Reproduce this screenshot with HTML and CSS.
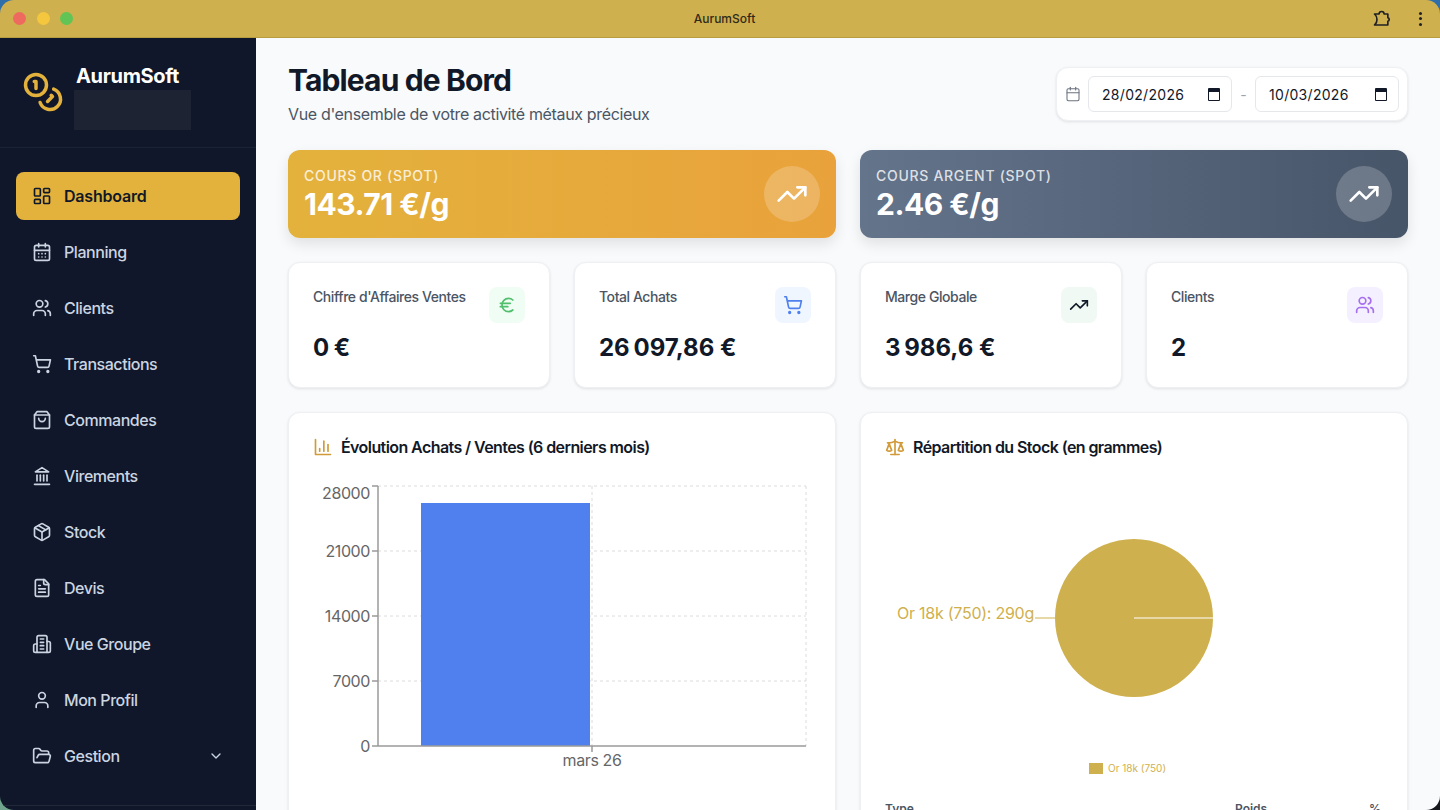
FILE: index.html
```html
<!DOCTYPE html>
<html lang="fr">
<head>
  <meta charset="UTF-8">
  <title>AurumSoft</title>
  <link rel="stylesheet" href="styles.css">
</head>
<body>
  <svg class="icon-defs" xmlns="http://www.w3.org/2000/svg">
    <symbol id="i-dashboard" viewBox="0 0 24 24"><rect x="3" y="3" width="7" height="9" rx="1"/><rect x="14" y="3" width="7" height="5" rx="1"/><rect x="14" y="12" width="7" height="9" rx="1"/><rect x="3" y="16" width="7" height="5" rx="1"/></symbol>
    <symbol id="i-planning" viewBox="0 0 24 24"><path d="M8 2v4"/><path d="M16 2v4"/><rect x="3" y="4" width="18" height="18" rx="2"/><path d="M3 10h18"/><path d="M8 14h.01"/><path d="M12 14h.01"/><path d="M16 14h.01"/><path d="M8 18h.01"/><path d="M12 18h.01"/><path d="M16 18h.01"/></symbol>
    <symbol id="i-users" viewBox="0 0 24 24"><path d="M16 21v-2a4 4 0 0 0-4-4H6a4 4 0 0 0-4 4v2"/><circle cx="9" cy="7" r="4"/><path d="M22 21v-2a4 4 0 0 0-3-3.87"/><path d="M16 3.13a4 4 0 0 1 0 7.75"/></symbol>
    <symbol id="i-cart" viewBox="0 0 24 24"><circle cx="8" cy="21" r="1"/><circle cx="19" cy="21" r="1"/><path d="M2.05 2.05h2l2.66 12.42a2 2 0 0 0 2 1.58h9.78a2 2 0 0 0 1.95-1.57l1.65-7.43H5.12"/></symbol>
    <symbol id="i-bag" viewBox="0 0 24 24"><path d="M6 2 3 6v14a2 2 0 0 0 2 2h14a2 2 0 0 0 2-2V6l-3-4Z"/><path d="M3 6h18"/><path d="M16 10a4 4 0 0 1-8 0"/></symbol>
    <symbol id="i-bank" viewBox="0 0 24 24"><path d="M3 22h18"/><path d="M6 18v-7"/><path d="M10 18v-7"/><path d="M14 18v-7"/><path d="M18 18v-7"/><path d="M12 2l8 5H4Z"/></symbol>
    <symbol id="i-package" viewBox="0 0 24 24"><path d="m7.5 4.27 9 5.15"/><path d="M21 8a2 2 0 0 0-1-1.73l-7-4a2 2 0 0 0-2 0l-7 4A2 2 0 0 0 3 8v8a2 2 0 0 0 1 1.73l7 4a2 2 0 0 0 2 0l7-4A2 2 0 0 0 21 16Z"/><path d="m3.3 7 8.7 5 8.7-5"/><path d="M12 22V12"/></symbol>
    <symbol id="i-file" viewBox="0 0 24 24"><path d="M15 2H6a2 2 0 0 0-2 2v16a2 2 0 0 0 2 2h12a2 2 0 0 0 2-2V7Z"/><path d="M14 2v4a2 2 0 0 0 2 2h4"/><path d="M10 9H8"/><path d="M16 13H8"/><path d="M16 17H8"/></symbol>
    <symbol id="i-building" viewBox="0 0 24 24"><path d="M6 22V4a2 2 0 0 1 2-2h8a2 2 0 0 1 2 2v18Z"/><path d="M6 12H4a2 2 0 0 0-2 2v6a2 2 0 0 0 2 2h2"/><path d="M18 9h2a2 2 0 0 1 2 2v9a2 2 0 0 1-2 2h-2"/><path d="M10 6h4"/><path d="M10 10h4"/><path d="M10 14h4"/><path d="M10 18h4"/></symbol>
    <symbol id="i-user" viewBox="0 0 24 24"><path d="M19 21v-2a4 4 0 0 0-4-4H9a4 4 0 0 0-4 4v2"/><circle cx="12" cy="7" r="4"/></symbol>
    <symbol id="i-folder" viewBox="0 0 24 24"><path d="m6 14 1.5-2.9A2 2 0 0 1 9.24 10H20a2 2 0 0 1 1.94 2.5l-1.54 6a2 2 0 0 1-1.95 1.5H4a2 2 0 0 1-2-2V5a2 2 0 0 1 2-2h3.9a2 2 0 0 1 1.69.9l.81 1.2a2 2 0 0 0 1.67.9H18a2 2 0 0 1 2 2v2"/></symbol>
    <symbol id="i-trend" viewBox="0 0 24 24"><path d="M22 7l-8.5 8.5-5-5L2 17"/><path d="M16 7h6v6"/></symbol>
    <symbol id="i-calendar" viewBox="0 0 24 24"><path d="M8 2v4"/><path d="M16 2v4"/><rect x="3" y="4" width="18" height="18" rx="2"/><path d="M3 10h18"/></symbol>
  </svg>

  <div class="window">
    <!-- Title bar -->
    <header class="titlebar">
      <div class="traffic">
        <span class="light light-red"></span>
        <span class="light light-yellow"></span>
        <span class="light light-green"></span>
      </div>
      <span class="window-title">AurumSoft</span>
      <div class="titlebar-tools">
        <svg class="ext-icon" viewBox="0 0 24 24"><path d="M3 6h5.5a3 3 0 0 1 6 0H19v4.3a2.3 2.3 0 0 1 0 4.4v4.5H3c.8-.8 3-2.5 3-6.7S3.8 6.8 3 6Z"/></svg>
        <span class="kebab"><i></i><i></i><i></i></span>
      </div>
    </header>

    <div class="app">
      <!-- Sidebar -->
      <aside class="sidebar">
        <div class="brand">
          <svg class="brand-logo" viewBox="0 0 24 24"><circle cx="8" cy="8" r="6"/><path d="M18.09 10.37A6 6 0 1 1 10.34 18"/><path d="M7 6h1v4"/><path d="m16.71 13.88.7.71-2.82 2.82"/></svg>
          <div class="brand-text">
            <div class="brand-name">AurumSoft</div>
            <div class="brand-blank"></div>
          </div>
        </div>
        <nav class="nav">
          <a class="nav-item active"><svg class="icon"><use href="#i-dashboard"/></svg>Dashboard</a>
          <a class="nav-item"><svg class="icon"><use href="#i-planning"/></svg>Planning</a>
          <a class="nav-item"><svg class="icon"><use href="#i-users"/></svg>Clients</a>
          <a class="nav-item"><svg class="icon"><use href="#i-cart"/></svg>Transactions</a>
          <a class="nav-item"><svg class="icon"><use href="#i-bag"/></svg>Commandes</a>
          <a class="nav-item"><svg class="icon"><use href="#i-bank"/></svg>Virements</a>
          <a class="nav-item"><svg class="icon"><use href="#i-package"/></svg>Stock</a>
          <a class="nav-item"><svg class="icon"><use href="#i-file"/></svg>Devis</a>
          <a class="nav-item"><svg class="icon"><use href="#i-building"/></svg>Vue Groupe</a>
          <a class="nav-item"><svg class="icon"><use href="#i-user"/></svg>Mon Profil</a>
          <a class="nav-item"><svg class="icon"><use href="#i-folder"/></svg>Gestion
            <svg class="chevron" viewBox="0 0 24 24"><path d="m6 9 6 6 6-6"/></svg>
          </a>
        </nav>
        <div class="sidebar-foot"></div>
      </aside>

      <!-- Main content -->
      <main class="main">
        <div class="page-head">
          <div>
            <h1>Tableau de Bord</h1>
            <p class="subtitle">Vue d'ensemble de votre activité métaux précieux</p>
          </div>
          <div class="date-range">
            <svg class="icon-cal"><use href="#i-calendar"/></svg>
            <div class="date-field">28/02/2026<span class="date-picker"></span></div>
            <span class="date-sep">-</span>
            <div class="date-field">10/03/2026<span class="date-picker"></span></div>
          </div>
        </div>

        <div class="spot-row">
          <div class="spot spot-gold">
            <div>
              <div class="spot-label">COURS OR (SPOT)</div>
              <div class="spot-value">143.71 €/g</div>
            </div>
            <span class="spot-icon"><svg class="icon-lg"><use href="#i-trend"/></svg></span>
          </div>
          <div class="spot spot-silver">
            <div>
              <div class="spot-label">COURS ARGENT (SPOT)</div>
              <div class="spot-value">2.46 €/g</div>
            </div>
            <span class="spot-icon"><svg class="icon-lg"><use href="#i-trend"/></svg></span>
          </div>
        </div>

        <div class="stat-row">
          <div class="stat">
            <div class="stat-top">
              <span class="stat-label">Chiffre d'Affaires Ventes</span>
              <span class="stat-icon tint-green"><svg class="icon" viewBox="0 0 24 24"><path d="M4 10h12"/><path d="M4 14h9"/><path d="M19 6a7.7 7.7 0 0 0-5.2-2A7.9 7.9 0 0 0 6 12c0 4.4 3.5 8 7.8 8 2 0 3.8-.8 5.2-2"/></svg></span>
            </div>
            <div class="stat-value">0 €</div>
          </div>
          <div class="stat">
            <div class="stat-top">
              <span class="stat-label">Total Achats</span>
              <span class="stat-icon tint-blue"><svg class="icon"><use href="#i-cart"/></svg></span>
            </div>
            <div class="stat-value">26&#8239;097,86 €</div>
          </div>
          <div class="stat">
            <div class="stat-top">
              <span class="stat-label">Marge Globale</span>
              <span class="stat-icon tint-mint"><svg class="icon"><use href="#i-trend"/></svg></span>
            </div>
            <div class="stat-value">3&#8239;986,6 €</div>
          </div>
          <div class="stat">
            <div class="stat-top">
              <span class="stat-label">Clients</span>
              <span class="stat-icon tint-purple"><svg class="icon"><use href="#i-users"/></svg></span>
            </div>
            <div class="stat-value">2</div>
          </div>
        </div>

        <div class="chart-row">
          <section class="chart-card">
            <h3 class="chart-title">
              <svg class="icon title-icon" viewBox="0 0 24 24"><path d="M3 3v18h18"/><path d="M18 17V9"/><path d="M13 17V5"/><path d="M8 17v-3"/></svg>
              Évolution Achats / Ventes (6 derniers mois)
            </h3>
            <svg class="chart" width="498" height="320" viewBox="0 0 498 320">
              <g class="grid">
                <path d="M65 13H493M65 78H493M65 143H493M65 208H493"/>
                <path d="M279 13V273M493 13V273"/>
              </g>
              <rect x="108" y="30" width="169" height="243" fill="#4f80ed"/>
              <path class="axis" d="M65 13V273H493M59 13H65M59 78H65M59 143H65M59 208H65M59 273H65M279 273V279"/>
              <g class="tick-y">
                <text x="57" y="26">28000</text>
                <text x="57" y="84">21000</text>
                <text x="57" y="149">14000</text>
                <text x="57" y="214">7000</text>
                <text x="57" y="279">0</text>
              </g>
              <text class="tick-x" x="279" y="293">mars 26</text>
            </svg>
          </section>

          <section class="chart-card">
            <h3 class="chart-title">
              <svg class="icon title-icon" viewBox="0 0 24 24"><path d="m16 16 3-8 3 8c-.87.65-1.92 1-3 1s-2.13-.35-3-1Z"/><path d="m2 16 3-8 3 8c-.87.65-1.92 1-3 1s-2.13-.35-3-1Z"/><path d="M7 21h10"/><path d="M12 3v18"/><path d="M3 7h2c2 0 5-1 7-2 2 1 5 2 7 2h2"/></svg>
              Répartition du Stock (en grammes)
            </h3>
            <svg class="chart" width="498" height="320" viewBox="0 0 498 320">
              <circle cx="249" cy="145" r="79" fill="#cfb04e"/>
              <path d="M249 145H328" stroke="#fff" stroke-width="1"/>
              <path d="M150 145H170" stroke="#cfb04e" stroke-width="1"/>
              <text class="pie-label" x="149" y="146">Or 18k (750): 290g</text>
              <rect x="204" y="290" width="14" height="11" fill="#cfb04e"/>
              <text class="pie-legend" x="223" y="299">Or 18k (750)</text>
            </svg>
            <div class="stock-head">
              <span>Type</span>
              <span>Poids</span>
              <span>%</span>
            </div>
          </section>
        </div>
      </main>
    </div>
  </div>
</body>
</html>
```

FILE: styles.css
```css
/* General */
* {
  box-sizing: border-box;
}

html,
body {
  height: 100%;
}

body {
  margin: 0;
  overflow: hidden;
  font-family: 'Inter', 'Liberation Sans', sans-serif;
  color: #111827;
  /* desktop wallpaper showing in the window corners */
  background: linear-gradient(90deg, #6fa58c 50%, #15171c 50%) bottom / 100% 20px no-repeat, #2f6ea8;
}

.icon-defs {
  display: none;
}

.icon,
.icon-cal,
.icon-lg,
.chevron,
.brand-logo {
  fill: none;
  stroke: currentColor;
  stroke-width: 2;
  stroke-linecap: round;
  stroke-linejoin: round;
  flex-shrink: 0;
}

.icon {
  width: 20px;
  height: 20px;
}

/* Window */
.window {
  height: 810px;
  display: flex;
  flex-direction: column;
  border-radius: 14px;
  overflow: hidden;
}

.titlebar {
  height: 38px;
  flex-shrink: 0;
  display: flex;
  align-items: center;
  padding: 0 18px 0 13px;
  background-color: #cfb04e;
  border-bottom: 1px solid #b89c42;
}

.traffic {
  display: flex;
  gap: 10.5px;
}

.light {
  width: 13px;
  height: 13px;
  border-radius: 50%;
}

.light-red { background-color: #ee6a5f; }
.light-yellow { background-color: #f5c73f; }
.light-green { background-color: #61c454; }

.window-title {
  flex: 1;
  text-align: center;
  padding-left: 4px;
  font-size: 12px;
  font-weight: 500;
  color: #2f2a1a;
}

.titlebar-tools {
  display: flex;
  align-items: center;
  gap: 27px;
}

.ext-icon {
  width: 20px;
  height: 20px;
  fill: none;
  stroke: #1f2024;
  stroke-width: 2;
  stroke-linejoin: round;
}

.kebab {
  display: flex;
  flex-direction: column;
  gap: 2.5px;
}

.kebab i {
  width: 3px;
  height: 3px;
  border-radius: 50%;
  background-color: #1f2024;
}

.app {
  flex: 1;
  display: flex;
  min-height: 0;
}

/* Sidebar */
.sidebar {
  width: 256px;
  flex-shrink: 0;
  display: flex;
  flex-direction: column;
  background-color: #10172a;
}

.brand {
  height: 110px;
  display: flex;
  align-items: flex-start;
  gap: 12px;
  padding: 24px 22px 0;
  border-bottom: 1px solid #1b2435;
}

.brand-logo {
  width: 42px;
  height: 42px;
  margin-top: 9px;
  color: #e3b23c;
}

.brand-name {
  font-size: 20px;
  line-height: 28px;
  font-weight: 700;
  letter-spacing: -0.33px;
  color: #fff;
}

.brand-blank {
  width: 117px;
  height: 40px;
  margin-left: -2px;
  background-color: #1e2333;
}

.nav {
  flex: 1;
  display: flex;
  flex-direction: column;
  gap: 8px;
  padding: 24px 16px 0;
}

.nav-item {
  height: 48px;
  flex-shrink: 0;
  display: flex;
  align-items: center;
  gap: 12px;
  padding: 0 16px;
  border-radius: 8px;
  font-size: 16px;
  font-weight: 500;
  letter-spacing: -0.45px;
  color: #cbd5e1;
}

.nav-item.active {
  background-color: #e3b23c;
  color: #111827;
  font-weight: 600;
  letter-spacing: -0.2px;
}

.chevron {
  width: 16px;
  height: 16px;
  margin-left: auto;
}

.sidebar-foot {
  height: 5px;
  border-top: 1px solid #1f2937;
}

/* Main */
.main {
  flex: 1;
  min-width: 0;
  overflow: hidden;
  padding: 24px 32px 0;
  background-color: #f8fafc;
}

.page-head {
  display: flex;
  justify-content: space-between;
  align-items: center;
  margin-bottom: 24px;
}

h1 {
  margin: 0;
  font-size: 30px;
  line-height: 36px;
  font-weight: 700;
  letter-spacing: -0.87px;
  color: #111827;
}

.subtitle {
  margin: 4px 0 0;
  font-size: 16px;
  line-height: 24px;
  letter-spacing: -0.35px;
  color: #4b5563;
}

.date-range {
  display: flex;
  align-items: center;
  padding: 8px;
  background-color: #fff;
  border: 1px solid #eef0f4;
  border-radius: 12px;
  box-shadow: 0 1px 3px rgba(0, 0, 0, 0.1);
}

.icon-cal {
  width: 16px;
  height: 16px;
  margin-right: 7px;
  color: #6b7280;
  stroke-width: 1.6;
}

.date-field {
  width: 144px;
  height: 36px;
  display: flex;
  align-items: center;
  justify-content: space-between;
  padding: 0 11px 0 13px;
  background-color: #fff;
  border: 1px solid #e5e7eb;
  border-radius: 6px;
  font-size: 14px;
  letter-spacing: 0.3px;
  color: #111827;
}

.date-picker {
  width: 12px;
  height: 13px;
  border: 1.5px solid #111827;
  border-top-width: 4px;
  border-radius: 1px;
}

.date-sep {
  width: 23px;
  text-align: center;
  font-size: 14px;
  color: #9ca3af;
}

/* Spot price cards */
.spot-row,
.chart-row {
  display: grid;
  grid-template-columns: 1fr 1fr;
  gap: 24px;
}

.spot {
  display: flex;
  justify-content: space-between;
  align-items: center;
  padding: 16px;
  border-radius: 12px;
  color: #fff;
  box-shadow: 0 6px 14px rgba(0, 0, 0, 0.1);
}

.spot-gold { background: linear-gradient(90deg, #e3b23c, #e9a23b); }
.spot-silver { background: linear-gradient(90deg, #64748b, #475569); }

.spot-label {
  font-size: 14px;
  line-height: 20px;
  font-weight: 500;
  letter-spacing: 0.7px;
  color: rgba(255, 255, 255, 0.8);
}

.spot-value {
  margin-top: 1px;
  font-size: 30px;
  line-height: 35px;
  font-weight: 700;
  letter-spacing: -0.5px;
}

.spot-icon {
  width: 56px;
  height: 56px;
  display: flex;
  align-items: center;
  justify-content: center;
  border-radius: 50%;
  background-color: rgba(255, 255, 255, 0.2);
}

.icon-lg {
  width: 32px;
  height: 32px;
}

/* Stat cards */
.stat-row {
  display: grid;
  grid-template-columns: repeat(4, 1fr);
  gap: 24px;
  margin: 24px 0;
}

.stat,
.chart-card {
  padding: 24px;
  background-color: #fff;
  border: 1px solid #eef0f4;
  border-radius: 12px;
  box-shadow: 0 1px 3px rgba(0, 0, 0, 0.1);
}

.stat-top {
  display: flex;
  justify-content: space-between;
  align-items: flex-start;
}

.stat-label {
  font-size: 14px;
  line-height: 20px;
  font-weight: 500;
  letter-spacing: -0.43px;
  color: #4b5563;
}

.stat-icon {
  width: 36px;
  height: 36px;
  display: flex;
  align-items: center;
  justify-content: center;
  border-radius: 8px;
}

.tint-green { background-color: #f0fdf4; color: #4fbf6c; }
.tint-blue { background-color: #eff6ff; color: #4f80ed; }
.tint-mint { background-color: #f0f9f4; color: #111827; }
.tint-purple { background-color: #f5f0ff; color: #a56ff0; }

.stat-value {
  margin-top: 9px;
  font-size: 24px;
  line-height: 31px;
  font-weight: 700;
  letter-spacing: -0.55px;
}

/* Charts */
.chart-card {
  height: 500px;
}

.chart-title {
  display: flex;
  align-items: center;
  gap: 8px;
  margin: 0 0 16px;
  font-size: 16px;
  line-height: 20px;
  font-weight: 600;
  letter-spacing: -0.58px;
  color: #111827;
}

.title-icon {
  color: #d19b3a;
}

.chart {
  display: block;
}

.grid path {
  fill: none;
  stroke: #dcdcdc;
  stroke-dasharray: 3 3;
}

.axis {
  fill: none;
  stroke: #9a9a9a;
  stroke-width: 1.5;
}

.tick-y text,
.tick-x {
  font-size: 16px;
  letter-spacing: -0.4px;
  fill: #666;
}

.tick-y text {
  text-anchor: end;
}

.tick-x {
  text-anchor: middle;
}

.pie-label {
  font-size: 16px;
  letter-spacing: -0.25px;
  text-anchor: end;
  fill: #cfb04e;
}

.pie-legend {
  font-size: 10px;
  fill: #cfb04e;
}

.stock-head {
  display: grid;
  grid-template-columns: 350px 92px 1fr;
  margin-top: 8px;
  font-size: 12px;
  line-height: 16px;
  font-weight: 600;
  color: #4b5563;
}

.stock-head span:last-child {
  text-align: right;
  padding-right: 2px;
}
```
